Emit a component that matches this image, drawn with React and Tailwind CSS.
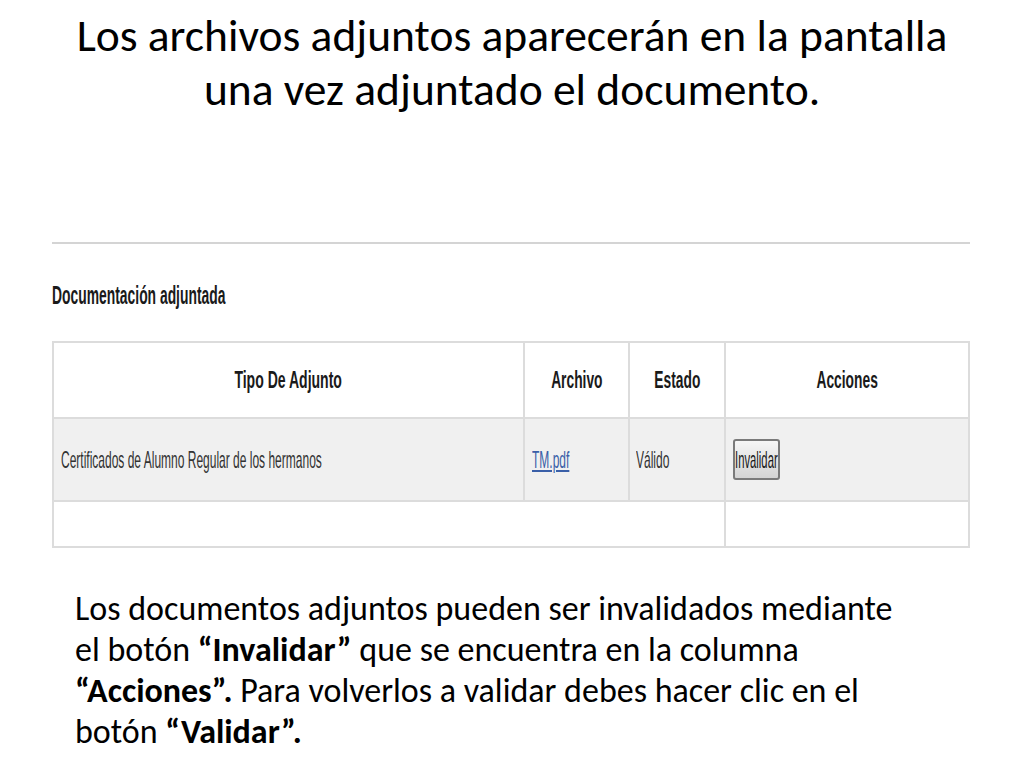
import React from 'react';

const slideFont = { fontFamily: 'Carlito, Lato, sans-serif' };
const shotFont = { fontFamily: '"Liberation Sans", Arial, sans-serif' };

// the embedded screenshot is squeezed horizontally, so its text is too
const Squeeze = ({ children, className = '' }) => (
  <span className={`inline-block whitespace-nowrap ${className}`}>{children}</span>
);

const App = () => {
  return (
    <div className="w-[1024px] h-[768px] bg-white text-black overflow-hidden" style={slideFont}>
      {/* Title */}
      <h1 className="pt-[9px] text-center text-[45.5px] leading-[54px] text-black">
        Los archivos adjuntos aparecerán en la pantalla
        <br />
        una vez adjuntado el documento.
      </h1>

      {/* Embedded screenshot */}
      <div className="mt-[125px] ml-[52px] w-[918px]" style={shotFont}>
        <div className="h-[2px] bg-[#d4d4d4]"></div>
        <h2 className="mt-[36px] h-[30px] text-[25px] leading-[30px] font-bold text-[#1a1a1a]">
          <Squeeze className="origin-left scale-x-[0.555]">Documentación adjuntada</Squeeze>
        </h2>

        <table className="mt-[31px] w-full table-fixed border-collapse border-2 border-[#d6d6d6] text-[#1a1a1a]">
          <thead>
            <tr className="h-[76px] bg-white text-[23px] font-bold">
              <th className="w-[471px] border-2 border-[#dcdcdc]"><Squeeze className="scale-x-[0.61]">Tipo De Adjunto</Squeeze></th>
              <th className="w-[105px] border-2 border-[#dcdcdc]"><Squeeze className="scale-x-[0.6]">Archivo</Squeeze></th>
              <th className="w-[96px] border-2 border-[#dcdcdc]"><Squeeze className="scale-x-[0.6]">Estado</Squeeze></th>
              <th className="border-2 border-[#dcdcdc]"><Squeeze className="scale-x-[0.6]">Acciones</Squeeze></th>
            </tr>
          </thead>
          <tbody>
            <tr className="h-[83px] bg-[#f0f0f0] text-[24px] text-[#333]">
              <td className="border-2 border-[#dcdcdc] px-[7px]">
                <Squeeze className="origin-left scale-x-[0.5]">Certificados de Alumno Regular de los hermanos</Squeeze>
              </td>
              <td className="border-2 border-[#dcdcdc] px-[7px]">
                <a href="#" className="text-[#3a5fa8]">
                  <Squeeze className="origin-left scale-x-[0.5] underline">TM.pdf</Squeeze>
                </a>
              </td>
              <td className="border-2 border-[#dcdcdc] px-[6px]">
                <Squeeze className="origin-left scale-x-[0.5]">Válido</Squeeze>
              </td>
              <td className="border-2 border-[#dcdcdc] px-[7px]">
                <button className="flex w-[47px] h-[41px] items-center justify-center overflow-visible rounded-[3px] border-2 border-[#7a7a7a] bg-gradient-to-b from-[#f6f6f6] to-[#d4d4d4] text-[24px] text-[#1a1a1a]">
                  <Squeeze className="scale-x-[0.47]">Invalidar</Squeeze>
                </button>
              </td>
            </tr>
            <tr className="h-[46px] bg-white">
              <td colSpan={3} className="border-2 border-[#dcdcdc]"></td>
              <td className="border-2 border-[#dcdcdc]"></td>
            </tr>
          </tbody>
        </table>
      </div>

      {/* Description */}
      <p className="mt-[40px] ml-[75px] w-[900px] text-[34px] leading-[41px] text-black">
        Los documentos adjuntos pueden ser invalidados mediante
        <br />
        el botón <b>“Invalidar”</b> que se encuentra en la columna
        <br />
        <b>“Acciones”.</b> Para volverlos a validar debes hacer clic en el
        <br />
        botón <b>“Validar”.</b>
      </p>
    </div>
  );
};

export default App;
